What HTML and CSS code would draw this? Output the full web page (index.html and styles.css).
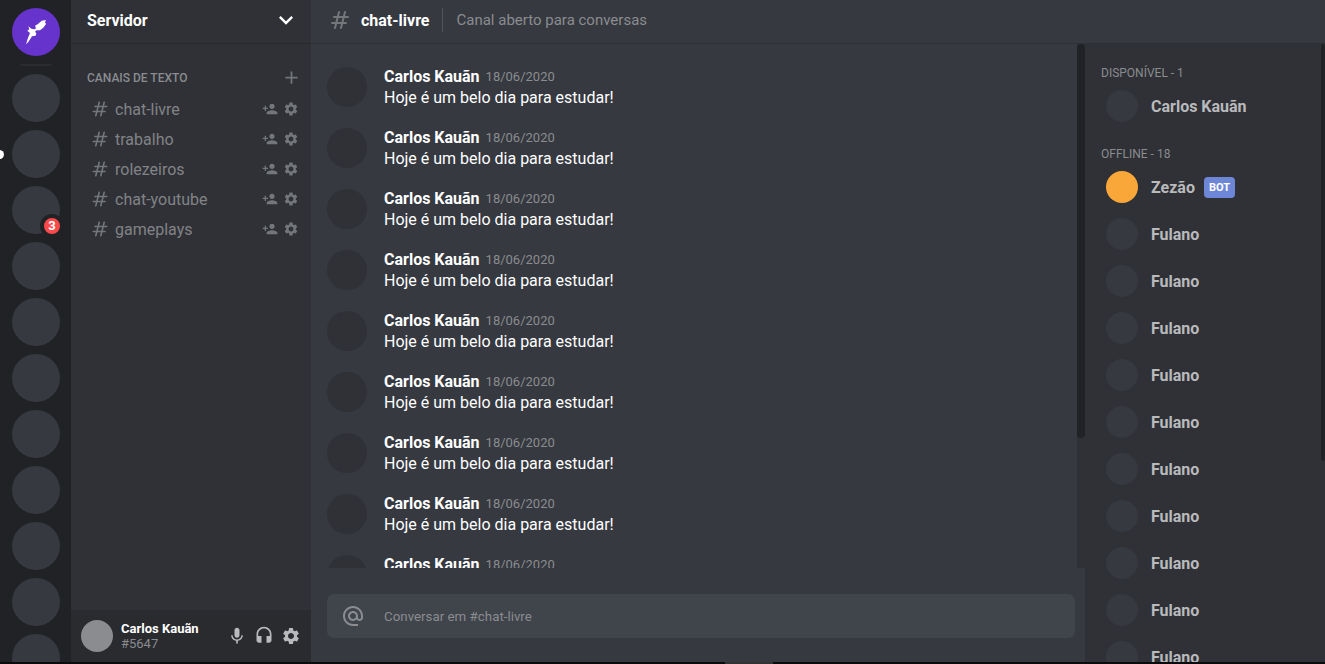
FILE: index.html
```html
<!DOCTYPE html>
<html lang="pt-BR">
<head>
<meta charset="utf-8">
<title>Servidor</title>
<link rel="stylesheet" href="styles.css">
</head>
<body>
<svg class="sprite" aria-hidden="true">
  <symbol id="hash" viewBox="0 0 24 24"><path fill="none" stroke="currentColor" stroke-width="2" stroke-linecap="round" d="M7 20l4-16m2 16l4-16M6 9h14M4 15h14"/></symbol>
  <symbol id="person-add" viewBox="0 0 24 24"><path d="M15 12c2.210 0 4-1.790 4-4s-1.790-4-4-4-4 1.790-4 4 1.790 4 4 4zm-9-2V7H4v3H1v2h3v3h2v-3h3v-2H6zm9 4c-2.670 0-8 1.340-8 4v2h16v-2c0-2.660-5.330-4-8-4z"/></symbol>
  <symbol id="gear" viewBox="0 0 24 24"><path d="M19.140 12.940c.040-.300.060-.610.060-.940 0-.320-.020-.640-.070-.940l2.030-1.580c.180-.140.230-.410.120-.610l-1.920-3.320c-.120-.220-.370-.290-.590-.220l-2.390.960c-.500-.380-1.030-.700-1.620-.940l-.360-2.540c-.040-.240-.240-.410-.480-.410h-3.840c-.240 0-.430.170-.470.410l-.360 2.540c-.590.240-1.130.570-1.620.940l-2.390-.960c-.220-.080-.470 0-.590.220L2.740 8.870c-.120.210-.080.470.120.610l2.030 1.580c-.050.300-.090.630-.090.940s.020.640.070.940l-2.030 1.580c-.180.140-.230.410-.120.610l1.920 3.320c.120.220.370.290.590.220l2.390-.960c.500.380 1.030.700 1.620.940l.360 2.540c.050.240.240.410.480.410h3.840c.240 0 .440-.170.470-.410l.360-2.540c.590-.240 1.130-.560 1.620-.940l2.390.960c.220.080.470 0 .590-.220l1.920-3.320c.120-.220.070-.470-.120-.610l-2.010-1.580zM12 15.600c-1.980 0-3.600-1.620-3.600-3.600s1.620-3.600 3.600-3.600 3.600 1.620 3.600 3.600-1.620 3.600-3.600 3.600z"/></symbol>
  <symbol id="plus" viewBox="0 0 24 24"><path d="M19 13h-6v6h-2v-6H5v-2h6V5h2v6h6v2z"/></symbol>
  <symbol id="chevron" viewBox="0 0 24 24"><path d="M16.590 8.590L12 13.170 7.410 8.590 6 10l6 6 6-6z"/></symbol>
  <symbol id="at" viewBox="0 0 24 24"><path d="M12 1.950c-5.520 0-10 4.480-10 10s4.480 10 10 10h5v-2h-5c-4.340 0-8-3.660-8-8s3.660-8 8-8 8 3.660 8 8v1.430c0 .790-.710 1.570-1.500 1.570s-1.500-.780-1.500-1.570v-1.430c0-2.760-2.240-5-5-5s-5 2.240-5 5 2.240 5 5 5c1.380 0 2.640-.560 3.540-1.470.650.890 1.770 1.470 2.960 1.470 1.970 0 3.500-1.600 3.500-3.570v-1.430c0-5.520-4.480-10-10-10zm0 13c-1.660 0-3-1.340-3-3s1.340-3 3-3 3 1.340 3 3-1.340 3-3 3z"/></symbol>
  <symbol id="mic" viewBox="0 0 24 24"><path d="M12 14c1.660 0 2.990-1.340 2.990-3L15 5c0-1.660-1.340-3-3-3S9 3.340 9 5v6c0 1.660 1.340 3 3 3zm5.300-3c0 3-2.540 5.100-5.300 5.100S6.700 14 6.700 11H5c0 3.410 2.720 6.230 6 6.720V21h2v-3.280c3.280-.480 6-3.300 6-6.720h-1.700z"/></symbol>
  <symbol id="headset" viewBox="0 0 24 24"><path d="M12 1c-4.970 0-9 4.030-9 9v7c0 1.660 1.340 3 3 3h3v-8H5v-2c0-3.870 3.130-7 7-7s7 3.130 7 7v2h-4v8h3c1.660 0 3-1.340 3-3v-7c0-4.970-4.030-9-9-9z"/></symbol>
</svg>

<div class="app">
  <nav class="servers">
    <div class="server server--home">
      <svg class="rocket" viewBox="0 0 120 120"><path d="M90 24L77 26 66 36 57 41 60 49 56 52 46 50 37 43 40 52 34 56 42 63 36 77 30 97 37 90 48 73 59 71 61 64 57 59 62 55 72 55 82 47 90 36 87 31Z"/></svg>
    </div>
    <div class="servers__separator"></div>
    <div class="server"></div>
    <div class="server server--unread"></div>
    <div class="server"><span class="server__badge">3</span></div>
    <div class="server"></div>
    <div class="server"></div>
    <div class="server"></div>
    <div class="server"></div>
    <div class="server"></div>
    <div class="server"></div>
    <div class="server"></div>
    <div class="server"></div>
  </nav>

  <aside class="sidebar">
    <header class="server-name"><span>Servidor</span><svg class="icon icon--28"><use href="#chevron"/></svg></header>
    <div class="channels">
      <div class="channels__title"><span>CANAIS DE TEXTO</span><svg class="icon icon--21"><use href="#plus"/></svg></div>
      <div class="channel"><svg class="icon icon--20"><use href="#hash"/></svg><span class="channel__name">chat-livre</span><svg class="icon icon--16"><use href="#person-add"/></svg><svg class="icon icon--16"><use href="#gear"/></svg></div>
      <div class="channel"><svg class="icon icon--20"><use href="#hash"/></svg><span class="channel__name">trabalho</span><svg class="icon icon--16"><use href="#person-add"/></svg><svg class="icon icon--16"><use href="#gear"/></svg></div>
      <div class="channel"><svg class="icon icon--20"><use href="#hash"/></svg><span class="channel__name">rolezeiros</span><svg class="icon icon--16"><use href="#person-add"/></svg><svg class="icon icon--16"><use href="#gear"/></svg></div>
      <div class="channel"><svg class="icon icon--20"><use href="#hash"/></svg><span class="channel__name">chat-youtube</span><svg class="icon icon--16"><use href="#person-add"/></svg><svg class="icon icon--16"><use href="#gear"/></svg></div>
      <div class="channel"><svg class="icon icon--20"><use href="#hash"/></svg><span class="channel__name">gameplays</span><svg class="icon icon--16"><use href="#person-add"/></svg><svg class="icon icon--16"><use href="#gear"/></svg></div>
    </div>
    <footer class="user">
      <div class="user__avatar"></div>
      <div class="user__data"><strong>Carlos Kauãn</strong><span>#5647</span></div>
      <div class="user__icons"><svg class="icon icon--20"><use href="#mic"/></svg><svg class="icon icon--20"><use href="#headset"/></svg><svg class="icon icon--20"><use href="#gear"/></svg></div>
    </footer>
  </aside>

  <header class="channel-info">
    <svg class="icon icon--24"><use href="#hash"/></svg>
    <h1>chat-livre</h1>
    <span class="channel-info__separator"></span>
    <span class="channel-info__text">Canal aberto para conversas</span>
  </header>

  <main class="chat">
    <div class="chat__history">
      <div class="messages">
        <article class="message"><div class="message__avatar"></div><div class="message__body"><div class="message__head"><strong>Carlos Kauãn</strong><time>18/06/2020</time></div><p>Hoje é um belo dia para estudar!</p></div></article>
        <article class="message"><div class="message__avatar"></div><div class="message__body"><div class="message__head"><strong>Carlos Kauãn</strong><time>18/06/2020</time></div><p>Hoje é um belo dia para estudar!</p></div></article>
        <article class="message"><div class="message__avatar"></div><div class="message__body"><div class="message__head"><strong>Carlos Kauãn</strong><time>18/06/2020</time></div><p>Hoje é um belo dia para estudar!</p></div></article>
        <article class="message"><div class="message__avatar"></div><div class="message__body"><div class="message__head"><strong>Carlos Kauãn</strong><time>18/06/2020</time></div><p>Hoje é um belo dia para estudar!</p></div></article>
        <article class="message"><div class="message__avatar"></div><div class="message__body"><div class="message__head"><strong>Carlos Kauãn</strong><time>18/06/2020</time></div><p>Hoje é um belo dia para estudar!</p></div></article>
        <article class="message"><div class="message__avatar"></div><div class="message__body"><div class="message__head"><strong>Carlos Kauãn</strong><time>18/06/2020</time></div><p>Hoje é um belo dia para estudar!</p></div></article>
        <article class="message"><div class="message__avatar"></div><div class="message__body"><div class="message__head"><strong>Carlos Kauãn</strong><time>18/06/2020</time></div><p>Hoje é um belo dia para estudar!</p></div></article>
        <article class="message"><div class="message__avatar"></div><div class="message__body"><div class="message__head"><strong>Carlos Kauãn</strong><time>18/06/2020</time></div><p>Hoje é um belo dia para estudar!</p></div></article>
        <article class="message"><div class="message__avatar"></div><div class="message__body"><div class="message__head"><strong>Carlos Kauãn</strong><time>18/06/2020</time></div></div></article>
      </div>
      <div class="scrollbar scrollbar--chat"><div class="scrollbar__thumb"></div></div>
    </div>
    <div class="chat__input"><svg class="icon icon--24"><use href="#at"/></svg><span>Conversar em #chat-livre</span></div>
  </main>

  <aside class="members">
    <div class="members__list">
      <h2>DISPONÍVEL - 1</h2>
      <div class="member"><i></i><strong>Carlos Kauãn</strong></div>
      <h2 class="members__offline">OFFLINE - 18</h2>
      <div class="member member--bot"><i></i><strong>Zezão</strong><span class="member__tag">BOT</span></div>
      <div class="member"><i></i><strong>Fulano</strong></div>
      <div class="member"><i></i><strong>Fulano</strong></div>
      <div class="member"><i></i><strong>Fulano</strong></div>
      <div class="member"><i></i><strong>Fulano</strong></div>
      <div class="member"><i></i><strong>Fulano</strong></div>
      <div class="member"><i></i><strong>Fulano</strong></div>
      <div class="member"><i></i><strong>Fulano</strong></div>
      <div class="member"><i></i><strong>Fulano</strong></div>
      <div class="member"><i></i><strong>Fulano</strong></div>
      <div class="member"><i></i><strong>Fulano</strong></div>
    </div>
    <div class="scrollbar scrollbar--members"><div class="scrollbar__thumb"></div></div>
  </aside>

  <div class="page-edge"><div class="page-edge__handle"></div></div>
</div>
</body>
</html>
```
FILE: styles.css
```css
:root {
  --primary: #36393f;
  --secondary: #2f3136;
  --tertiary: #202225;
  --quaternary: #292b2f;
  --input: #40444b;
  --symbol: #74777a;
  --gray: #8a8c90;
  --senary: #828386;
  --white: #fff;
}

* { margin: 0; padding: 0; box-sizing: border-box; }

body {
  height: 664px;
  overflow: hidden;
  background: var(--primary);
  color: var(--white);
  font: 16px/19px Roboto, sans-serif;
}

.sprite { display: none; }

.icon { flex: none; fill: currentColor; color: var(--symbol); }
.icon--16 { width: 16px; height: 16px; }
.icon--20 { width: 20px; height: 20px; }
.icon--21 { width: 21px; height: 21px; }
.icon--24 { width: 24px; height: 24px; }
.icon--28 { width: 28px; height: 28px; color: var(--white); }

.app {
  display: grid;
  height: 664px;
  grid-template-columns: 71px 240px minmax(0, 1fr) 240px;
  grid-template-rows: 44px minmax(0, 1fr) 2px;
  grid-template-areas:
    "servers sidebar info info"
    "servers sidebar chat members"
    "edge edge edge edge";
}

/* Server list */
.servers {
  grid-area: servers;
  display: flex;
  flex-direction: column;
  align-items: center;
  gap: 8px;
  padding: 8px 0 0 1px;
  overflow: hidden;
  background: var(--tertiary);
}
.server {
  position: relative;
  flex: none;
  display: grid;
  place-items: center;
  width: 48px;
  height: 48px;
  border-radius: 50%;
  background: var(--primary);
}
.server--home { background: #6633cc; }
.rocket { width: 40px; height: 40px; fill: #fff; }
.servers__separator { flex: none; width: 32px; height: 2px; background: #292b2f; }
.server--unread::before {
  content: "";
  position: absolute;
  left: -17px;
  top: 20px;
  width: 9px;
  height: 9px;
  border-radius: 50%;
  background: #fff;
}
.server__badge {
  position: absolute;
  right: -4px;
  bottom: -4px;
  width: 24px;
  height: 24px;
  border: 4px solid var(--tertiary);
  border-radius: 12px;
  background: #f84a4b;
  font-size: 13px;
  font-weight: 700;
  line-height: 16px;
  text-align: center;
}

/* Channel sidebar */
.sidebar {
  grid-area: sidebar;
  display: grid;
  grid-template-rows: 44px minmax(0, 1fr) 52px;
  background: var(--secondary);
}
.server-name {
  display: flex;
  align-items: center;
  justify-content: space-between;
  padding: 0 11px 3px 16px;
  border-bottom: 1px solid #27292d;
  font-weight: 700;
}
.channels { padding: 23px 9px 0 16px; }
.channels__title {
  display: flex;
  align-items: center;
  justify-content: space-between;
  height: 21px;
  margin-bottom: 6px;
  color: var(--gray);
  font-size: 12px;
  font-weight: 500;
}
.channels__title span { padding-top: 2px; }
.channel {
  display: flex;
  align-items: center;
  gap: 5px;
  height: 30px;
  padding: 0 3px;
  color: var(--senary);
}
.channel__name { flex: 1; }
.user {
  display: flex;
  align-items: center;
  gap: 8px;
  padding: 0 10px;
  background: var(--quaternary);
}
.user__avatar { width: 32px; height: 32px; border-radius: 50%; background: var(--gray); }
.user__data { flex: 1; display: flex; flex-direction: column; font-size: 13px; line-height: 15px; }
.user__data span { color: var(--gray); }
.user__icons { display: flex; gap: 7px; }
.user__icons .icon { color: #b9babc; }

/* Channel header */
.channel-info {
  grid-area: info;
  display: flex;
  align-items: center;
  padding: 0 17px 3px;
  border-bottom: 1px solid #2d2f34;
}
.channel-info h1 { margin-left: 9px; font-size: 16px; font-weight: 700; }
.channel-info__separator { width: 1px; height: 24px; margin: 0 14px 0 12px; background: #515359; }
.channel-info__text { color: var(--gray); font-size: 15px; }

/* Conversation */
.chat { grid-area: chat; display: grid; grid-template-rows: 524px 44px; row-gap: 26px; }
.chat__history { display: grid; grid-template-columns: minmax(0, 1fr) 8px; overflow: hidden; }
.messages { padding: 22px 16px 0; overflow: hidden; }
.message { display: flex; gap: 17px; height: 41px; margin-bottom: 20px; }
.message__avatar { flex: none; width: 40px; height: 40px; margin-top: 1px; border-radius: 50%; background: var(--secondary); }
.message__head { display: flex; align-items: center; gap: 6px; height: 21px; }
.message__head time { color: var(--gray); font-size: 13px; }
.message p { line-height: 21px; }
.chat__input {
  display: flex;
  align-items: center;
  gap: 19px;
  margin: 0 10px 0 16px;
  padding: 0 14px;
  border-radius: 7px;
  background: var(--input);
  color: var(--gray);
  font-size: 13.333px;
}
.chat__input .icon { color: var(--gray); }

/* Members */
.members { grid-area: members; display: grid; grid-template-columns: minmax(0, 1fr) 4px; overflow: hidden; background: var(--secondary); }
.members__list { padding: 21px 16px 0; overflow: hidden; }
.members h2 { height: 17px; color: var(--gray); font-size: 12px; font-weight: 400; line-height: 17px; }
.members .members__offline { margin-top: 17px; }
.member { display: flex; align-items: center; height: 47px; padding: 0 5px; }
.member i { width: 32px; height: 32px; margin-right: 13px; border-radius: 50%; background: var(--primary); }
.member strong { padding-top: 2px; color: #b9babc; font-weight: 700; }
.member--bot i { background: #faa73a; }
.member__tag {
  height: 21px;
  margin-top: 1px;
  margin-left: 9px;
  padding: 0 5px;
  border-radius: 4px;
  background: #6e86d6;
  font-size: 11px;
  font-weight: 700;
  line-height: 21px;
}

.scrollbar { background: var(--secondary); }
.scrollbar__thumb { border-radius: 4px; background: var(--tertiary); }
.scrollbar--chat .scrollbar__thumb { height: 394px; }
.scrollbar--members .scrollbar__thumb { height: 417px; }

.page-edge { grid-area: edge; background: #0b0b0c; }
.page-edge__handle { width: 48px; height: 2px; margin-left: 725px; background: #333; }
```
